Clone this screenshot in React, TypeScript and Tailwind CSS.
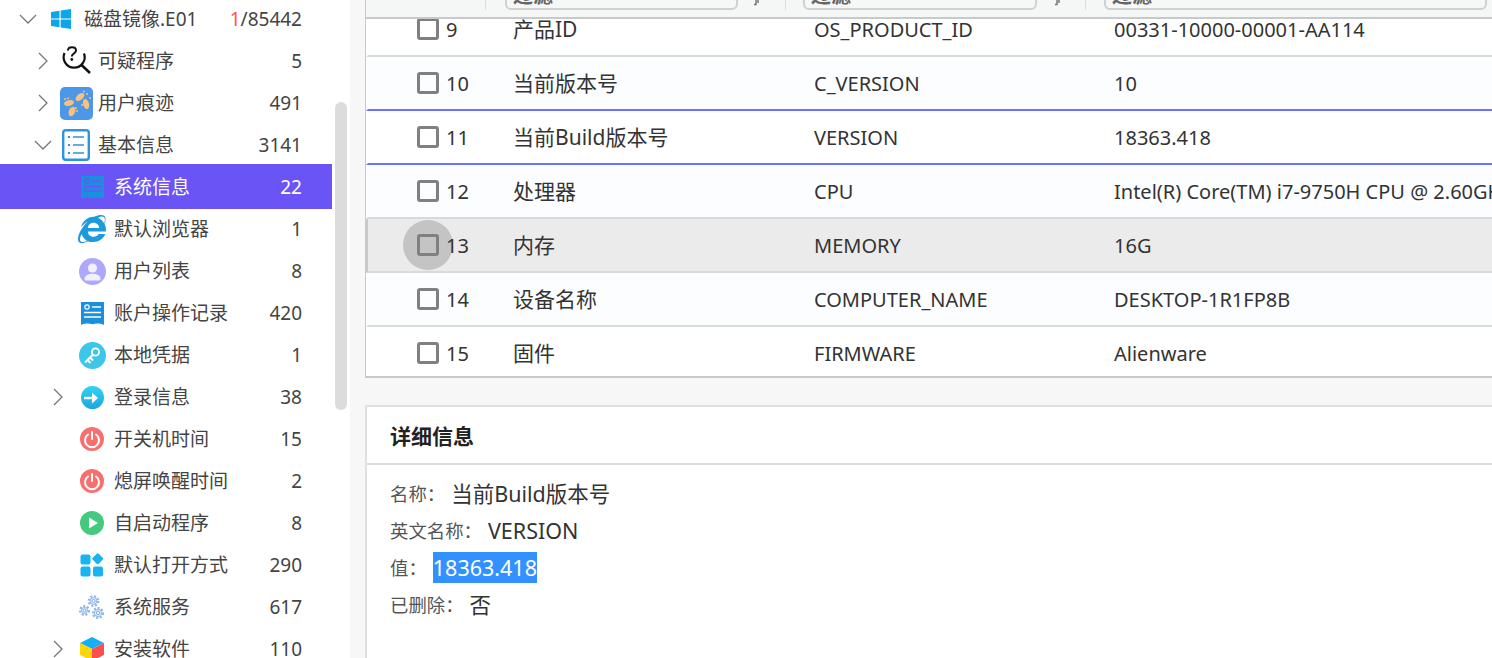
import type { ReactNode } from "react";
import { FaInternetExplorer } from "react-icons/fa";

const FONT = "font-['Noto_Sans','Noto_Sans_CJK_SC',sans-serif]";

const Chevron = ({ open }: { open?: boolean }) =>
  open ? (
    <svg width="18" height="10" viewBox="0 0 18 10" fill="none" stroke="#777" strokeWidth="1.3">
      <path d="M1 1l8 8 8-8" />
    </svg>
  ) : (
    <svg width="10" height="18" viewBox="0 0 10 18" fill="none" stroke="#777" strokeWidth="1.3">
      <path d="M1 1l8 8-8 8" />
    </svg>
  );

const WindowsIcon = () => (
  <svg width="22" height="22" viewBox="0 0 22 22" fill="#0ca7ea">
    <path d="M1 4l8.5-1.3v7.7H1zM10.7 2.5L21 1v9.4H10.7zM1 11.6h8.5v7.7L1 18zM10.7 11.6H21V21l-10.3-1.5z" />
  </svg>
);

const SuspectIcon = () => (
  <svg width="32" height="32" viewBox="0 0 32 32" fill="none" stroke="#111" strokeWidth="2.2">
    <path d="M4.500 8A10.500 10.500 0 1 0 24 8.500" />
    <path d="M21.500 20l8.500 8" strokeWidth="2.6" />
    <path d="M8 5.500c0-4.500 8-4.500 8 0 0 3-4.200 3-4.200 6" strokeWidth="2" />
    <circle cx="11.800" cy="14.500" r="1.400" fill="#111" stroke="none" />
  </svg>
);

const FootprintIcon = () => (
  <div className="h-[33px] w-[33px] rounded-[5px] bg-[#4c97e8]">
    <svg width="33" height="33" viewBox="0 0 33 33" fill="#f8c27c">
      <ellipse cx="9" cy="16" rx="5" ry="2.800" transform="rotate(-15 9 16)" />
      <ellipse cx="12" cy="24.500" rx="3.200" ry="5" transform="rotate(20 12 24.500)" />
      <ellipse cx="20" cy="10" rx="5.200" ry="3" transform="rotate(-40 20 10)" />
      <ellipse cx="26" cy="17" rx="3" ry="5.200" transform="rotate(-15 26 17)" />
      <circle cx="5" cy="12" r="1" />
      <circle cx="8" cy="11.500" r="1" />
      <circle cx="16" cy="21" r="1" />
      <circle cx="17" cy="24" r="1" />
      <circle cx="24" cy="4.500" r="1" />
      <circle cx="27" cy="7" r="1" />
      <circle cx="30" cy="11" r="1" />
      <circle cx="22" cy="18" r="1" />
    </svg>
  </div>
);

const ListIcon = () => (
  <svg width="28" height="32" viewBox="0 0 28 32" fill="none" stroke="#2f93dd">
    <rect x="1.200" y="1.200" width="25.600" height="29.600" rx="2.500" strokeWidth="2.400" />
    <path d="M11 8h11M11 16h11M11 24h11" strokeWidth="1.600" />
    <path d="M6 8h2M6 16h2M6 24h2" strokeWidth="2" />
  </svg>
);

const CardIcon = ({ line = "#ffffff" }: { line?: string }) => (
  <svg width="23" height="24" viewBox="0 0 23 24">
    <path d="M0 1h23v23c-4-1.800-8-1.800-11.500-.8C8 22.200 4 22.200 0 24z" fill="#1a8fdd" />
    <circle cx="6" cy="6" r="2.200" fill="none" stroke={line} strokeWidth="1.200" />
    <path d="M11 6h9M3 11.500h17M3 16h17" stroke={line} strokeWidth="1.400" />
  </svg>
);

const UserIcon = () => (
  <svg width="27" height="27" viewBox="0 0 27 27">
    <circle cx="13.500" cy="13.500" r="13.500" fill="#aea8fb" />
    <circle cx="13.500" cy="10" r="4.600" fill="#f2f0ff" />
    <path d="M5.500 21c0-7 16-7 16 0 0 1-1 1.500-2 1.500H7.500c-1 0-2-.5-2-1.500z" fill="#f2f0ff" />
  </svg>
);

const KeyIcon = () => (
  <svg width="27" height="27" viewBox="0 0 27 27">
    <circle cx="13.500" cy="13.500" r="13.500" fill="#3cc6ea" />
    <circle cx="16.500" cy="10" r="3.600" fill="none" stroke="#fff" strokeWidth="1.800" />
    <path d="M13.800 12.800L6 20.500M8.500 18l3 3M11 15.500l3 3" stroke="#fff" strokeWidth="2" fill="none" />
  </svg>
);

const LoginIcon = () => (
  <svg width="23" height="23" viewBox="0 0 23 23">
    <defs>
      <linearGradient id="login" x1="0" y1="0" x2="0" y2="1">
        <stop offset="0" stopColor="#31d3f2" />
        <stop offset="1" stopColor="#1ca6e0" />
      </linearGradient>
    </defs>
    <circle cx="11.500" cy="11.500" r="11.500" fill="url(#login)" />
    <path d="M3 12h11" fill="none" stroke="#fff" strokeWidth="2.400" />
    <path d="M11 6.500l6 5.500-6 5.500z" fill="#fff" />
  </svg>
);

const PowerIcon = () => (
  <svg width="24" height="24" viewBox="0 0 24 24">
    <circle cx="12" cy="12" r="12" fill="#f76f6f" />
    <path d="M8 7.500a7 7 0 1 0 8 0" fill="none" stroke="#fff" strokeWidth="2" strokeLinecap="round" />
    <path d="M12 5v7" stroke="#fff" strokeWidth="2" strokeLinecap="round" />
  </svg>
);

const PlayIcon = () => (
  <svg width="24" height="24" viewBox="0 0 24 24">
    <circle cx="12" cy="12" r="12" fill="#45c97f" />
    <path d="M9 6.500l9 5.500-9 5.500z" fill="#fff" />
  </svg>
);

const GridIcon = () => (
  <svg width="24" height="24" viewBox="0 0 24 24" fill="#18b3f0">
    <rect x="0.500" y="1.500" width="10" height="10" rx="2" />
    <rect x="0.500" y="13.500" width="10" height="10" rx="2" />
    <rect x="13" y="13.500" width="10" height="10" rx="2" />
    <rect x="13.500" y="1.500" width="8.500" height="8.500" rx="1.500" transform="rotate(45 17.750 5.750)" />
  </svg>
);

const Gear = ({ x, y, r }: { x: number; y: number; r: number }) => (
  <g>
    <circle cx={x} cy={y} r={r + 0.6} fill="none" stroke="#8fb8ea" strokeWidth="2.600" strokeDasharray="2 1.600" />
    <circle cx={x} cy={y} r={r - 0.6} fill="#eaf2fc" stroke="#8fb8ea" strokeWidth="1" />
    <circle cx={x} cy={y} r={r * 0.4} fill="#fff" stroke="#7fa9e2" strokeWidth="1" />
  </g>
);

const GearsIcon = () => (
  <svg width="26" height="25" viewBox="0 0 26 25">
    <Gear x={14.500} y={6} r={4} />
    <Gear x={5.500} y={15.500} r={3.600} />
    <Gear x={19} y={18} r={4.200} />
  </svg>
);

const BoxIcon = () => (
  <svg width="24" height="24" viewBox="0 0 24 24">
    <path d="M12 0l12 6-12 6L0 6z" fill="#16aef5" />
    <path d="M0 6l12 6v12L0 18z" fill="#ffd60a" />
    <path d="M24 6l-12 6v12l12-6z" fill="#f9504f" />
  </svg>
);

type Level = 0 | 1 | 2;

type TreeItem = {
  level: Level;
  name: string;
  count: ReactNode;
  icon: ReactNode;
  chevron?: "open" | "closed";
  active?: boolean;
};

const levelRow = ["pl-[18px]", "pl-[33px]", "pl-[48px]"];
const levelIcon = ["ml-[12px] w-[22px]", "ml-[7px] w-[32px]", "ml-[10px] w-[28px]"];
const levelText = ["ml-[12px]", "ml-[6px]", "ml-[8px]"];

const tree: TreeItem[] = [
  {
    level: 0,
    name: "磁盘镜像.E01",
    count: (
      <>
        <span className="text-[#f55]">1</span>/85442
      </>
    ),
    icon: <WindowsIcon />,
    chevron: "open",
  },
  { level: 1, name: "可疑程序", count: 5, icon: <SuspectIcon />, chevron: "closed" },
  { level: 1, name: "用户痕迹", count: 491, icon: <FootprintIcon />, chevron: "closed" },
  { level: 1, name: "基本信息", count: 3141, icon: <ListIcon />, chevron: "open" },
  { level: 2, name: "系统信息", count: 22, icon: <CardIcon line="#6b54f6" />, active: true },
  { level: 2, name: "默认浏览器", count: 1, icon: <FaInternetExplorer className="text-[28px] text-[#1b9ade]" /> },
  { level: 2, name: "用户列表", count: 8, icon: <UserIcon /> },
  { level: 2, name: "账户操作记录", count: 420, icon: <CardIcon /> },
  { level: 2, name: "本地凭据", count: 1, icon: <KeyIcon /> },
  { level: 2, name: "登录信息", count: 38, icon: <LoginIcon />, chevron: "closed" },
  { level: 2, name: "开关机时间", count: 15, icon: <PowerIcon /> },
  { level: 2, name: "熄屏唤醒时间", count: 2, icon: <PowerIcon /> },
  { level: 2, name: "自启动程序", count: 8, icon: <PlayIcon /> },
  { level: 2, name: "默认打开方式", count: 290, icon: <GridIcon /> },
  { level: 2, name: "系统服务", count: 617, icon: <GearsIcon /> },
  { level: 2, name: "安装软件", count: 110, icon: <BoxIcon />, chevron: "closed" },
];

const Sidebar = () => (
  <aside className="relative h-full w-[350px] shrink-0 overflow-hidden bg-white">
    <div className="-mt-[2px] w-[332px]">
      {tree.map((item) => (
        <div
          key={item.name + item.level}
          className={`flex items-center pr-[30px] text-[19px] ${levelRow[item.level]} ${
            item.active ? "relative -mt-[2px] -mb-px h-[45px] bg-[#6b54f6] pt-px text-white" : "h-[42px] text-[#444]"
          }`}
        >
          <div className="flex w-[20px] shrink-0 items-center justify-center">
            {item.chevron && <Chevron open={item.chevron === "open"} />}
          </div>
          <div className={`flex shrink-0 items-center justify-center ${levelIcon[item.level]}`}>{item.icon}</div>
          <span className={`${levelText[item.level]} flex-1 whitespace-nowrap`}>{item.name}</span>
          <span className="whitespace-nowrap">{item.count}</span>
        </div>
      ))}
    </div>
    <div className="absolute left-[335px] top-[102px] h-[308px] w-[12px] rounded-md bg-[#dcdcdc]" />
  </aside>
);

const rows = [
  { no: 9, name: "产品ID", en: "OS_PRODUCT_ID", value: "00331-10000-00001-AA114", bg: "bg-white" },
  { no: 10, name: "当前版本号", en: "C_VERSION", value: "10", bg: "bg-[#fcfdff]", blue: true },
  { no: 11, name: "当前Build版本号", en: "VERSION", value: "18363.418", bg: "bg-white", blue: true },
  { no: 12, name: "处理器", en: "CPU", value: "Intel(R) Core(TM) i7-9750H CPU @ 2.60GHz", bg: "bg-[#fcfdff]" },
  { no: 13, name: "内存", en: "MEMORY", value: "16G", bg: "bg-[#ebebeb]", hover: true },
  { no: 14, name: "设备名称", en: "COMPUTER_NAME", value: "DESKTOP-1R1FP8B", bg: "bg-[#fcfdff]" },
  { no: 15, name: "固件", en: "FIRMWARE", value: "Alienware", bg: "bg-white" },
];

const Filter = ({ className }: { className: string }) => (
  <div className={`h-[30px] shrink-0 rounded-md border-2 border-[#cfd1d1] bg-[#f6f8f8] pl-[6px] text-[20px] leading-[28px] font-semibold text-[#666] ${className}`}>
    过滤
  </div>
);

const SortMark = ({ className }: { className: string }) => (
  <svg width="6" height="6" viewBox="0 0 6 6" fill="none" stroke="#777" strokeWidth="1.500" className={`-mb-[6px] shrink-0 self-start ${className}`}>
    <path d="M3 0v4.500H1M5 0v3" />
  </svg>
);

const Divider = ({ className }: { className: string }) => (
  <div className={`h-[20px] w-px shrink-0 bg-[#d9dcdc] ${className}`} />
);

const TableHead = () => (
  <div className="relative z-10 flex h-[19px] shrink-0 items-end border-b-2 border-[#c6cacb] bg-[#f5f7f7] pb-[7px]">
    <Divider className="ml-[119px]" />
    <Filter className="ml-[19px] w-[233px]" />
    <SortMark className="ml-[15px]" />
    <Divider className="ml-[26px]" />
    <Filter className="ml-[17px] w-[234px]" />
    <SortMark className="ml-[17px]" />
    <Divider className="ml-[25px]" />
    <Filter className="ml-[18px] w-[383px]" />
  </div>
);

const TableRows = () => (
  <div className="h-[357px] overflow-hidden">
    <div className="-mt-[16px]">
      {rows.map((row) => (
        <div
          key={row.no}
          className={`relative flex h-[54px] items-center whitespace-nowrap border-b-2 border-l-2 text-[20px] text-[#333] ${row.bg} ${
            row.blue ? "border-b-[#7070ff]" : "border-b-[#d8dada]"
          } ${row.hover ? "border-l-[#c6cacb]" : "border-l-transparent"}`}
        >
          <div className="relative flex w-[145px] shrink-0 items-center pl-[49px]">
            {row.hover && <div className="absolute left-[35px] top-1/2 h-[50px] w-[50px] -translate-y-1/2 rounded-full bg-[#c4c4c4]" />}
            <div className="relative h-[22px] w-[22px] rounded-[3px] border-[3px] border-[#808080]" />
            <span className="relative ml-[7px] pt-[2px]">{row.no}</span>
          </div>
          <div className="w-[301px] shrink-0 pt-[2px] text-[21px]">{row.name}</div>
          <div className="w-[300px] shrink-0 pt-[2px]">{row.en}</div>
          <div className="pt-[2px]">{row.value}</div>
        </div>
      ))}
    </div>
  </div>
);

const Detail = () => (
  <section className="mt-[27px] flex-1 border-t-2 border-l-2 border-[#e0e0e0] bg-white">
    <h2 className="flex h-[58px] items-center border-b-2 border-[#dcdcdc] pl-[23px] pt-[3px] text-[21px] font-bold text-[#222]">详细信息</h2>
    <div className="pl-[23px] pt-[11px] text-[18.4px] text-[#555]">
      <div className="flex h-[36.5px] items-center">
        名称：
        <span className="ml-[6px] text-[21.5px] text-[#333]">当前Build版本号</span>
      </div>
      <div className="flex h-[36.5px] items-center">
        英文名称：
        <span className="ml-[6px] text-[21.5px] text-[#333]">VERSION</span>
      </div>
      <div className="flex h-[37.5px] items-center">
        值：
        <span className="ml-[6px] -mt-px bg-[#3390ff] text-[21.5px] leading-[31px] text-white">18363.418</span>
      </div>
      <div className="flex h-[37.5px] items-center">
        已删除：
        <span className="ml-[6px] text-[21.5px] text-[#333]">否</span>
      </div>
    </div>
  </section>
);

export default function App() {
  return (
    <div className={`flex h-[658px] w-[1492px] overflow-hidden bg-[#f7f7f7] ${FONT}`}>
      <Sidebar />
      <main className="ml-[15px] flex min-w-0 flex-1 flex-col">
        <div className="flex h-[378px] shrink-0 flex-col border-b-2 border-l border-[#c6cacb]">
          <TableHead />
          <TableRows />
        </div>
        <Detail />
      </main>
    </div>
  );
}
